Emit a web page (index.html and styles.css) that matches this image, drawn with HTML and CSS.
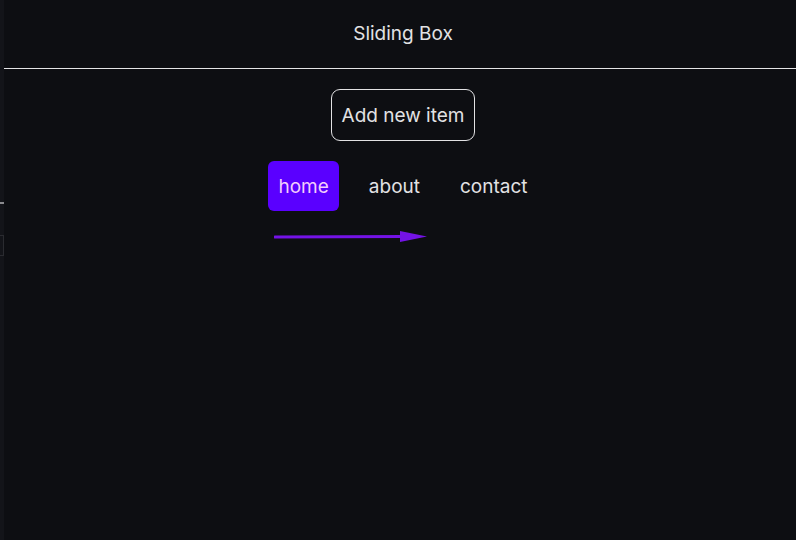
FILE: index.html
```html
<!DOCTYPE html>
<html>
<head>
<meta charset="utf-8">
<link rel="stylesheet" href="styles.css">
</head>
<body>
<div class="app">
  <aside class="strip">
    <span class="tick"></span>
    <span class="stub"></span>
  </aside>
  <main class="main">
    <header class="header">Sliding Box</header>
    <section class="content">
      <button class="add">Add new item</button>
      <nav class="nav">
        <span class="item active">home</span>
        <span class="item">about</span>
        <span class="item">contact</span>
      </nav>
      <div class="arrow-row">
        <svg width="160" height="14" viewBox="0 0 160 14">
          <line x1="1" y1="7" x2="130" y2="6.5" stroke="#7413e6" stroke-width="3" stroke-linecap="round"/>
          <polygon points="126,1 153,6.5 126,12" fill="#7413e6"/>
        </svg>
      </div>
    </section>
  </main>
</div>
</body>
</html>
```
FILE: styles.css
```css
html, body {
  margin: 0;
  padding: 0;
  background: #0d0e12;
  height: 100%;
}
body {
  font-family: Inter, "Noto Sans", sans-serif;
  color: #e2e2e4;
}
.app {
  display: flex;
  height: 540px;
}
.strip {
  width: 4px;
  flex: none;
  background: #131419;
  display: flex;
  flex-direction: column;
}
.tick {
  margin-top: 202px;
  height: 2px;
  background: #8a8a8e;
}
.stub {
  margin-top: 31px;
  height: 21px;
  border: 1px solid #2a2b30;
  border-left: none;
  box-sizing: border-box;
}
.main {
  flex: 1;
  display: flex;
  flex-direction: column;
}
.header {
  border-bottom: 1px solid #e4e4e6;
  display: flex;
  align-items: center;
  justify-content: center;
  font-size: 19px;
  padding-left: 6px;
  padding-bottom: 1px;
  box-sizing: content-box;
  height: 67px;
}
.content {
  display: flex;
  flex-direction: column;
  align-items: center;
  padding-left: 6px;
  padding-top: 20px;
}
.add {
  font-family: Inter, "Noto Sans", sans-serif;
  font-size: 19px;
  color: #e2e2e4;
  background: transparent;
  border: 1px solid #e2e2e4;
  border-radius: 9px;
  height: 52px;
  padding: 0 10px;
}
.nav {
  display: flex;
  gap: 20px;
  margin-top: 20px;
}
.item {
  font-size: 19px;
  height: 50px;
  padding: 0 10px;
  display: flex;
  align-items: center;
  border-radius: 6px;
}
.item.active {
  background: #5a00ff;
  color: #f3cdfb;
}
.arrow-row {
  width: 270px;
  margin-top: 19px;
  display: flex;
}
.arrow-row svg {
  margin-left: 6px;
}
```
